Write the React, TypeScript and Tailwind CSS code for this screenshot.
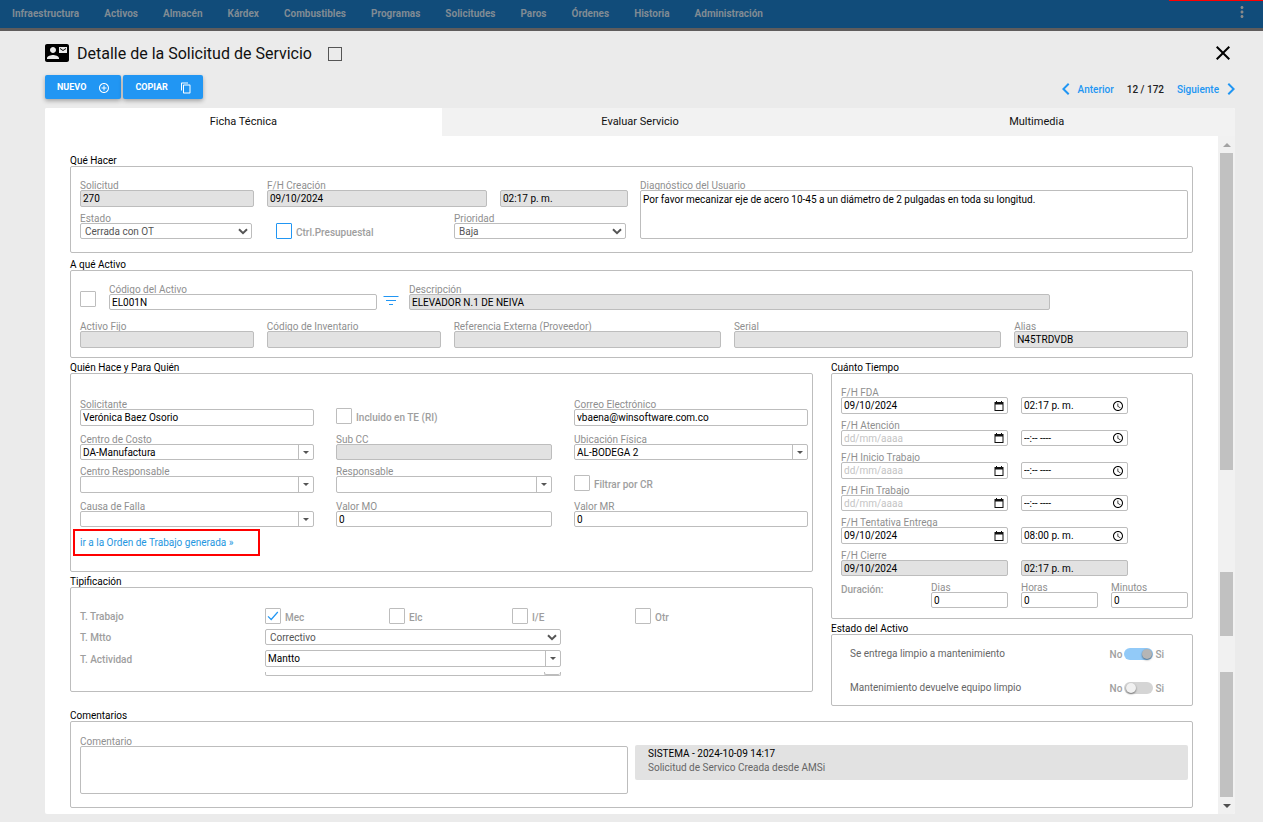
import React, { useId } from "react";
import {
  MdAccessTime,
  MdAddCircleOutline,
  MdChevronLeft,
  MdChevronRight,
  MdClose,
  MdContactMail,
  MdContentCopy,
  MdMoreVert,
} from "react-icons/md";

const NAV = [
  "Infraestructura",
  "Activos",
  "Almacén",
  "Kárdex",
  "Combustibles",
  "Programas",
  "Solicitudes",
  "Paros",
  "Órdenes",
  "Historia",
  "Administración",
];

function cx(...parts: (string | false | undefined)[]) {
  return parts.filter(Boolean).join(" ");
}

const LABEL = "block h-[10px] whitespace-nowrap text-[10px] leading-3 text-[#8f8f8f]";
const BOX = "block w-full rounded-xs border border-[#bdbdbd] text-[10px] text-black outline-none focus:border-[#2196f3]";

type FieldProps = {
  label?: string;
  hint?: string;
  value?: string;
  placeholder?: string;
  readOnly?: boolean;
  tall?: boolean;
  icon?: "date" | "time";
  className?: string;
};

function CalendarIcon() {
  return (
    <svg viewBox="0 0 10 10" className="h-[10px] w-[10px]" aria-hidden="true">
      <path d="M2 0h1v1h4V0h1v1h1.5v9h-9V1H2zM1.5 3.5V9h7V3.5z" fill="#111" fillRule="evenodd" />
    </svg>
  );
}

function Field({ label, hint, value = "", placeholder, readOnly, tall, icon, className }: FieldProps) {
  const id = useId();
  return (
    <div className={className}>
      {label ? (
        <label htmlFor={id} className={LABEL}>
          {label}
        </label>
      ) : (
        <div className="h-[10px]" />
      )}
      <div className="relative">
        <input
          id={id}
          type="text"
          aria-label={label ? undefined : hint}
          defaultValue={value}
          placeholder={placeholder}
          readOnly={readOnly}
          className={cx(
            BOX,
            "px-0.5 placeholder:text-[#c4c4c4]",
            tall ? "h-[17px]" : "h-4",
            readOnly ? "bg-[#e2e2e2]" : "bg-white",
          )}
        />
        {icon && (
          <span className="pointer-events-none absolute inset-y-0 right-1 flex items-center">
            {icon === "date" ? <CalendarIcon /> : <MdAccessTime className="text-[12px] text-black" />}
          </span>
        )}
      </div>
    </div>
  );
}

function SelectBox({ id, label, value }: { id?: string; label?: string; value: string }) {
  return (
    <div className="relative">
      <select
        id={id}
        aria-label={label}
        defaultValue={value}
        className="block h-4 w-full appearance-none rounded-xs border border-[#bdbdbd] bg-white pt-px pl-1 text-[10px] leading-[14px] text-[#555] outline-none"
      >
        <option>{value}</option>
      </select>
      <svg viewBox="0 0 10 7" className="pointer-events-none absolute top-[5px] right-1 h-[7px] w-[10px]" aria-hidden="true">
        <path d="M1 1.2l4 4 4-4" fill="none" stroke="#555" strokeWidth="2" />
      </svg>
    </div>
  );
}

function SelectField({ label, value, className }: { label: string; value: string; className?: string }) {
  const id = useId();
  return (
    <div className={className}>
      <label htmlFor={id} className={LABEL}>
        {label}
      </label>
      <SelectBox id={id} value={value} />
    </div>
  );
}

function Combo({ label, hint, value = "", tall }: { label?: string; hint?: string; value?: string; tall?: boolean }) {
  const id = useId();
  return (
    <div>
      {label && (
        <label htmlFor={id} className={LABEL}>
          {label}
        </label>
      )}
      <div
        className={cx(
          "flex overflow-hidden rounded-xs border border-[#bdbdbd] bg-white",
          tall ? "h-[17px]" : "h-4",
        )}
      >
        <input
          id={id}
          type="text"
          aria-label={label ? undefined : hint}
          defaultValue={value}
          className="min-w-0 flex-1 px-0.5 text-[10px] text-black outline-none"
        />
        <button
          type="button"
          aria-label={"Abrir " + (label ?? hint)}
          className="flex w-[15px] items-center justify-center border-l border-[#bdbdbd]"
        >
          <svg viewBox="0 0 6 3" className="h-[3px] w-[6px]" aria-hidden="true">
            <path d="M0 0h6L3 3z" fill="#555" />
          </svg>
        </button>
      </div>
    </div>
  );
}

function Check({
  label,
  hint,
  checked,
  blue,
  className,
}: {
  label?: string;
  hint?: string;
  checked?: boolean;
  blue?: boolean;
  className?: string;
}) {
  return (
    <label className={cx("flex h-4 items-center gap-1", className)}>
      <span className="relative block h-4 w-4">
        <input
          type="checkbox"
          aria-label={hint}
          defaultChecked={checked}
          className={cx(
            "peer block h-4 w-4 appearance-none rounded-[1px] border bg-white",
            blue ? "border-[#2196f3]" : "border-[#bdbdbd]",
          )}
        />
        <svg
          viewBox="0 0 16 16"
          className="pointer-events-none absolute inset-0 hidden h-4 w-4 peer-checked:block"
          aria-hidden="true"
        >
          <path d="M3 8.3l3.2 3.2L12.8 4" fill="none" stroke="#2196f3" strokeWidth="1.2" />
        </svg>
      </span>
      {label && (
        <span className="pt-1 text-[10px] leading-[14px] font-medium whitespace-nowrap text-[#9e9e9e]">{label}</span>
      )}
    </label>
  );
}

function RowName({ children }: { children: React.ReactNode }) {
  return <span className="pt-0.5 text-[10px] leading-3 font-medium text-[#9e9e9e]">{children}</span>;
}

function Section({ title, className, children }: { title: string; className?: string; children: React.ReactNode }) {
  return (
    <section>
      <h2 className="text-[10px] leading-[10px] text-black">{title}</h2>
      <div className={cx("rounded-xs border border-[#bdbdbd] pr-1 pl-[9px]", className)}>{children}</div>
    </section>
  );
}

function Toggle({ text, on }: { text: string; on?: boolean }) {
  return (
    <div className="flex items-center">
      <span className="flex-1 text-[10px] leading-[14px] text-[#666]">{text}</span>
      <label className="flex items-center gap-0.5 text-[10px] leading-3 font-medium text-[#9e9e9e]">
        <span className="pt-0.5">No</span>
        <span className="relative block h-3 w-[29px]">
          <input
            type="checkbox"
            role="switch"
            aria-label={text}
            defaultChecked={on}
            className="peer block h-3 w-full appearance-none rounded-full bg-[#d5d5d5] checked:bg-[#92caf8]"
          />
          <span className="pointer-events-none absolute top-px left-0.5 h-[10px] w-[10px] rounded-full bg-[#f1f1f1] shadow-[0_1px_2px_rgba(0,0,0,0.5)] peer-checked:right-px peer-checked:left-auto peer-checked:bg-[#b5b5b5]" />
        </span>
        <span className="pt-0.5">Si</span>
      </label>
    </div>
  );
}

function TimeRow({
  label,
  date = "",
  time = "",
  closed,
  tall,
}: {
  label: string;
  date?: string;
  time?: string;
  closed?: boolean;
  tall?: boolean;
}) {
  return (
    <div className="grid grid-cols-2 gap-x-[13px]">
      <Field
        label={label}
        value={date}
        placeholder="dd/mm/aaaa"
        tall={tall}
        readOnly={closed}
        icon={closed ? undefined : "date"}
      />
      <Field
        hint={label + " hora"}
        value={time || "--:-- ----"}
        tall={tall}
        readOnly={closed}
        icon={closed ? undefined : "time"}
        className="w-[64%]"
      />
    </div>
  );
}

function ScrollGutter() {
  return (
    <div className="flex w-[17px] flex-col bg-[#f1f1f1] px-0.5" aria-hidden="true">
      <div className="flex h-[17px] items-center justify-center">
        <svg viewBox="0 0 8 4" className="h-1 w-2">
          <path d="M0 4h8L4 0z" fill="#a3a3a3" />
        </svg>
      </div>
      <div className="flex-[317] bg-[#c1c1c1]" />
      <div className="flex-[102]" />
      <div className="flex-[64] bg-[#c1c1c1]" />
      <div className="flex-[36]" />
      <div className="flex-[125] bg-[#c1c1c1]" />
      <div className="flex h-[17px] items-center justify-center">
        <svg viewBox="0 0 8 4" className="h-1 w-2">
          <path d="M0 0h8L4 4z" fill="#505050" />
        </svg>
      </div>
    </div>
  );
}

function Tab({ name, active }: { name: string; active?: boolean }) {
  return (
    <button
      type="button"
      role="tab"
      aria-selected={active ?? false}
      className={cx("h-7 text-[11px] text-[#111]", active ? "bg-white" : "bg-[#f2f2f2]")}
    >
      {name}
    </button>
  );
}

const ACTION =
  "flex h-6 items-center gap-3 rounded-xs bg-[#2196f3] pt-0.5 pr-[11px] pl-3 text-[9px] font-bold text-white shadow-[0_2px_4px_rgba(0,0,0,0.3)]";

export default function App() {
  return (
    <div className="min-h-screen bg-[#ebebeb] pb-2 font-['Roboto',sans-serif] text-[10px]">
      <header className="relative flex h-[31px] items-center justify-between border-b-3 border-[#5f5c5c] bg-[#114c7a] pr-3 pl-3">
        <nav className="flex gap-[25px] text-[10px] font-bold text-[#808b94]">
          {NAV.map((n) => (
            <a key={n} href="#" className="leading-[14px]">
              {n}
            </a>
          ))}
        </nav>
        <button type="button" aria-label="Más opciones" className="-mt-1 text-[#8a8a8a]">
          <MdMoreVert className="text-[18px]" />
        </button>
        <span className="absolute top-0 right-0 h-px w-[94px] bg-[#f00]" />
      </header>

      <main className="pr-7 pl-[45px]">
        <div className="flex h-11 items-center">
          <MdContactMail className="text-[24px] text-black" />
          <h1 className="ml-2 pt-0.5 text-[16px] text-[#111]">Detalle de la Solicitud de Servicio</h1>
          <input
            type="checkbox"
            aria-label="Seleccionar solicitud"
            className="mt-0.5 ml-4 h-[14px] w-[14px] appearance-none border border-[#555]"
          />
          <button type="button" aria-label="Cerrar" className="ml-auto">
            <MdClose className="text-[24px] text-black" />
          </button>
        </div>

        <div className="flex items-center justify-between">
          <div className="flex gap-0.5">
            <button type="button" className={ACTION}>
              NUEVO
              <MdAddCircleOutline className="text-[12px]" />
            </button>
            <button type="button" className={ACTION}>
              COPIAR
              <MdContentCopy className="text-[12px]" />
            </button>
          </div>
          <div className="-mr-2 flex h-6 items-center pt-1 text-[10px] font-medium text-[#2196f3]">
            <a href="#" className="flex items-center">
              <MdChevronLeft className="text-[24px]" />
              Anterior
            </a>
            <span className="mx-[13px] text-[#222]">12 / 172</span>
            <a href="#" className="flex items-center">
              Siguiente
              <MdChevronRight className="text-[24px]" />
            </a>
          </div>
        </div>

        <div className="mt-[9px] overflow-hidden rounded-xs bg-white">
          <div role="tablist" className="grid grid-cols-3">
            <Tab name="Ficha Técnica" active />
            <Tab name="Evaluar Servicio" />
            <Tab name="Multimedia" />
          </div>

          <div className="flex">
            <form className="min-w-0 flex-1 px-[25px] pt-5 pb-[6px]">
              <Section title="Qué Hacer" className="py-[13px]">
                <div className="grid grid-cols-2 gap-x-3">
                  <div className="space-y-[6px]">
                    <div className="grid grid-cols-[174fr_220fr_128fr] gap-x-[13px]">
                      <Field label="Solicitud" value="270" readOnly tall />
                      <Field label="F/H Creación" value="09/10/2024" readOnly tall />
                      <Field hint="Hora de creación" value="02:17 p. m." readOnly tall />
                    </div>
                    <div className="grid grid-cols-[172fr_154fr_172fr] gap-x-6 pr-0.5">
                      <SelectField label="Estado" value="Cerrada con OT" />
                      <Check label="Ctrl.Presupuestal" blue className="self-end" />
                      <SelectField label="Prioridad" value="Baja" />
                    </div>
                  </div>
                  <div className="flex flex-col">
                    <label htmlFor="diagnostico" className={LABEL}>
                      Diagnóstico del Usuario
                    </label>
                    <textarea
                      id="diagnostico"
                      className={cx(BOX, "flex-1 resize-none px-0.5 py-0.5 leading-[14px]")}
                      defaultValue="Por favor mecanizar eje de acero 10-45 a un diámetro de 2 pulgadas en toda su longitud."
                    />
                  </div>
                </div>
              </Section>

              <div className="h-[7px]" />

              <Section title="A qué Activo" className="space-y-[11px] pt-[13px] pb-[9px]">
                <div className="grid grid-cols-[16px_281fr_32px_641fr_138fr] items-end">
                  <Check hint="Seleccionar activo" className="mb-[3px]" />
                  <Field label="Código del Activo" value="EL001N" className="ml-[13px]" />
                  <button type="button" aria-label="Filtrar activos" className="ml-[6px] flex h-4 w-4 items-start pt-px">
                    <svg viewBox="0 0 16 11" className="h-[11px] w-4" aria-hidden="true">
                      <path d="M0.5 1.5h15M3 5.5h10M6 9.5h4" stroke="#2196f3" strokeWidth="1.2" />
                    </svg>
                  </button>
                  <Field label="Descripción" value="ELEVADOR N.1 DE NEIVA" readOnly />
                </div>
                <div className="grid grid-cols-12 gap-x-[13px]">
                  <Field label="Activo Fijo" readOnly tall className="col-span-2" />
                  <Field label="Código de Inventario" readOnly tall className="col-span-2" />
                  <Field label="Referencia Externa (Proveedor)" readOnly tall className="col-span-3" />
                  <Field label="Serial" readOnly tall className="col-span-3" />
                  <Field label="Alias" value="N45TRDVDB" readOnly tall className="col-span-2" />
                </div>
              </Section>

              <div className="mt-[5px] grid grid-cols-[743fr_362fr] items-start gap-x-[18px]">
                <div className="space-y-[5px]">
                  <Section title="Quién Hace y Para Quién" className="pt-[25px] pb-[15px]">
                    <div className="grid grid-cols-[234fr_216fr_234fr] items-end gap-x-[22px]">
                      <Field label="Solicitante" value="Verónica Baez Osorio" tall />
                      <Check label="Incluido en TE (RI)" className="mb-0.5" />
                      <Field label="Correo Electrónico" value="vbaena@winsoftware.com.co" tall />
                    </div>
                    <div className="mt-2 grid grid-cols-[234fr_216fr_234fr] items-end gap-x-[22px]">
                      <Combo label="Centro de Costo" value="DA-Manufactura" />
                      <Field label="Sub CC" readOnly />
                      <Combo label="Ubicación Física" value="AL-BODEGA 2" />
                    </div>
                    <div className="mt-[6px] grid grid-cols-[234fr_216fr_234fr] items-end gap-x-[22px]">
                      <Combo label="Centro Responsable" tall />
                      <Combo label="Responsable" tall />
                      <Check label="Filtrar por CR" className="mb-0.5" />
                    </div>
                    <div className="mt-2 grid grid-cols-[234fr_216fr_234fr] items-end gap-x-[22px]">
                      <Combo label="Causa de Falla" />
                      <Field label="Valor MO" value="0" />
                      <Field label="Valor MR" value="0" />
                    </div>
                    <a
                      href="#"
                      className="mt-0.5 -ml-[7px] flex h-[27px] w-[187px] items-center border-2 border-[#f00] pl-[5px] text-[10px] text-[#1e96e0]"
                    >
                      ir a la Orden de Trabajo generada »
                    </a>
                  </Section>

                  <Section title="Tipificación" className="pt-5 pb-[15px]">
                    <div className="grid grid-cols-[185fr_543fr] items-center gap-y-[5px]">
                      <RowName>T. Trabajo</RowName>
                      <div className="grid grid-cols-[124fr_123fr_123fr_173fr]">
                        <Check label="Mec" checked />
                        <Check label="Elc" />
                        <Check label="I/E" />
                        <Check label="Otr" />
                      </div>
                      <RowName>T. Mtto</RowName>
                      <div className="w-6/11">
                        <SelectBox label="T. Mtto" value="Correctivo" />
                      </div>
                      <RowName>T. Actividad</RowName>
                      <div className="w-6/11">
                        <Combo hint="T. Actividad" value="Mantto" tall />
                      </div>
                      <span />
                      <div className="flex h-1 w-6/11 rounded-b-xs border border-t-0 border-[#bdbdbd]">
                        <span className="ml-auto h-[3px] w-4 rounded-b-xs border-b border-l border-[#bdbdbd]" />
                      </div>
                    </div>
                  </Section>
                </div>

                <div className="space-y-[5px]">
                  <Section title="Cuánto Tiempo" className="space-y-[6px] pt-[13px] pb-[10px]">
                    <TimeRow label="F/H FDA" date="09/10/2024" time="02:17 p. m." tall />
                    <TimeRow label="F/H Atención" />
                    <TimeRow label="F/H Inicio Trabajo" tall />
                    <TimeRow label="F/H Fin Trabajo" />
                    <TimeRow label="F/H Tentativa Entrega" date="09/10/2024" time="08:00 p. m." tall />
                    <TimeRow label="F/H Cierre" date="09/10/2024" time="02:17 p. m." closed />
                    <div className="grid grid-cols-4 gap-x-[13px]">
                      <span className="pt-px text-[10px] leading-[14px] font-medium text-[#9e9e9e]">Duración:</span>
                      <Field label="Dias" value="0" />
                      <Field label="Horas" value="0" />
                      <Field label="Minutos" value="0" />
                    </div>
                  </Section>

                  <Section title="Estado del Activo" className="pt-3 pb-[10px]">
                    <div className="space-y-5 pr-6 pl-[9px]">
                      <Toggle text="Se entrega limpio a mantenimiento" on />
                      <Toggle text="Mantenimiento devuelve equipo limpio" />
                    </div>
                  </Section>
                </div>
              </div>

              <div className="mt-[5px]">
                <Section title="Comentarios" className="pt-[14px] pb-[13px]">
                  <div className="grid grid-cols-[548fr_553fr] items-start gap-x-[7px]">
                    <div>
                      <label htmlFor="comentario" className={LABEL}>
                        Comentario
                      </label>
                      <textarea id="comentario" className={cx(BOX, "h-12 resize-none px-0.5")} />
                    </div>
                    <div className="mt-[9px] rounded-xs bg-[#e2e2e2] px-[13px] pt-0.5 pb-[5px] text-[10px] leading-[14px]">
                      <p className="text-black">SISTEMA - 2024-10-09 14:17</p>
                      <p className="text-[#666]">Solicitud de Servico Creada desde AMSi</p>
                    </div>
                  </div>
                </Section>
              </div>
            </form>
            <ScrollGutter />
          </div>
        </div>
      </main>
    </div>
  );
}
